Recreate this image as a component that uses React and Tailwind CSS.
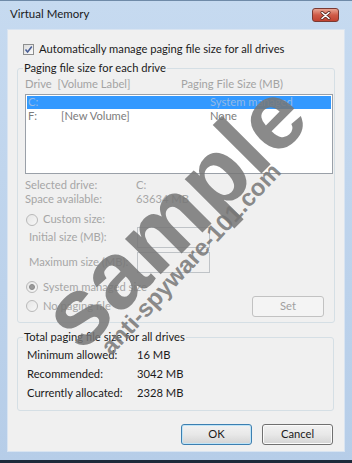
import React from "react";

const FONT = { fontFamily: 'Lato, "Noto Sans", Arial, sans-serif' };

function Radio({ checked }) {
  return (
    <span className="w-[12px] h-[12px] rounded-full border border-[#b9b9b9] bg-gradient-to-br from-[#e6e6e6] to-[#f7f7f7] flex items-center justify-center shrink-0">
      {checked && <span className="w-[6px] h-[6px] rounded-full bg-[#9a9a9a] border border-[#8a8a8a]" />}
    </span>
  );
}

function Button({ children, primary, disabled }) {
  const base = "h-[21px] rounded-[3px] border flex items-center justify-center";
  if (disabled) {
    return <div className={`${base} w-[72px] border-[#c2c2c2] bg-[#f4f4f4] text-[#a0a0a0]`}>{children}</div>;
  }
  return (
    <div
      className={`${base} w-[71px] text-[#1a1a1a] bg-gradient-to-b from-[#f2f2f2] via-[#e8e8e8] to-[#d4d4d4] ${
        primary ? "border-[#3c7fb1] shadow-[inset_0_0_0_1px_#bfe4f7]" : "border-[#707070] shadow-[inset_0_0_0_1px_#fbfbfb]"
      }`}
    >
      {children}
    </div>
  );
}

function TextBox() {
  return <div className="w-[73px] h-[21px] border border-[#bfc3c7] bg-[#f0f0f0]" />;
}

export default function App() {
  return (
    <div className="w-[352px] h-[463px] relative overflow-hidden bg-gradient-to-b from-[#c6daf0] to-[#b6cde8] text-[11.2px]" style={FONT}>
      {/* title bar */}
      <div className="h-[29px] flex items-center justify-between pl-[10px] pr-[13px] border-t border-[#6f8aa8]">
        <span className="text-[11.5px] text-[#1b1b1b] -mt-[2px]">Virtual Memory</span>
        <div className="w-[27px] h-[14px] rounded-[3px] border border-[#7a3a33] bg-gradient-to-b from-[#e8a493] via-[#cf5b48] to-[#c14230] flex items-center justify-center">
          <svg width="11" height="9" viewBox="0 0 11 9">
            <path d="M2 1.5 L9 7.5 M9 1.5 L2 7.5" stroke="#5a2a24" strokeWidth="3" strokeLinecap="round" />
            <path d="M2 1.5 L9 7.5 M9 1.5 L2 7.5" stroke="#ffffff" strokeWidth="1.6" strokeLinecap="round" />
          </svg>
        </div>
      </div>

      {/* client area */}
      <div className="mx-[7px] h-[423px] bg-[#f0f0f0] border border-[#d9e4f1] px-[9px] pt-[11px]">
        <div className="h-[16px] flex items-center ml-[6px] gap-[5px]">
          <span className="w-[11px] h-[11px] border border-[#8e8f8f] bg-gradient-to-br from-[#dcdcdc] to-[#fbfbfb] flex items-center justify-center">
            <svg width="9" height="9" viewBox="0 0 9 9">
              <path d="M1.5 4.5 L3.6 7 L7.8 1.5" fill="none" stroke="#4a5f97" strokeWidth="1.6" />
            </svg>
          </span>
          <span className="text-[#1b1b1b]">Automatically manage paging file size for all drives</span>
        </div>

        {/* group 1 */}
        <fieldset className="mt-[3px] border border-[#d5dfe5] rounded-[3px] pl-[7px] pr-[1px] pb-[5px]">
          <legend className="px-[1px] -ml-[2px] h-[16px] leading-[16px] text-[#1b1b1b]">Paging file size for each drive</legend>
          <div className="h-[16px] flex items-center text-[#a3a3a3]">
            <span className="w-[156px]">Drive&nbsp; [Volume Label]</span>
            <span>Paging File Size (MB)</span>
          </div>
          <div className="mt-[2px] h-[80px] border border-[#9aa0a8] bg-white p-[1px] text-[#7c7c7c]">
            <div className="h-[13px] flex items-center bg-[#3399ff] text-[#93b9e6]">
              <span className="w-[183px] pl-[1px]">C:</span>
              <span>System managed</span>
            </div>
            <div className="h-[15px] flex items-center">
              <span className="w-[34px] pl-[1px]">F:</span>
              <span className="w-[149px]">[New Volume]</span>
              <span>None</span>
            </div>
          </div>

          <div className="mt-[4px] text-[#a6a6a6]">
            <div className="h-[14px] flex items-center">
              <span className="w-[111px]">Selected drive:</span>
              <span>C:</span>
            </div>
            <div className="h-[14px] flex items-center">
              <span className="w-[111px]">Space available:</span>
              <span>63634 MB</span>
            </div>
          </div>

          <div className="mt-[6px] h-[15px] flex items-center gap-[5px] ml-[1px] text-[#a6a6a6]">
            <Radio />
            <span>Custom size:</span>
          </div>
          <div className="flex items-center text-[#a6a6a6]">
            <span className="w-[108px] ml-[4px]">Initial size (MB):</span>
            <TextBox />
          </div>
          <div className="mt-[4px] flex items-center text-[#a6a6a6]">
            <span className="w-[108px] ml-[4px]">Maximum size (MB):</span>
            <TextBox />
          </div>
          <div className="mt-[6px] h-[16px] flex items-center gap-[5px] ml-[1px] text-[#a6a6a6]">
            <Radio checked />
            <span>System managed size</span>
          </div>
          <div className="mt-[1px] flex items-center justify-between text-[#a6a6a6]">
            <div className="flex items-center gap-[5px] ml-[1px]">
              <Radio />
              <span>No paging file</span>
            </div>
            <div className="mr-[9px]">
              <Button disabled>Set</Button>
            </div>
          </div>
        </fieldset>

        {/* group 2 */}
        <fieldset className="mt-[6px] border border-[#d5dfe5] rounded-[3px] pl-[9px] pr-[1px] pt-[1px] pb-[7px] mr-[1px]">
          <legend className="px-[1px] -ml-[4px] h-[16px] leading-[16px] text-[#1b1b1b]">Total paging file size for all drives</legend>
          {[
            ["Minimum allowed:", "16 MB"],
            ["Recommended:", "3042 MB"],
            ["Currently allocated:", "2328 MB"],
          ].map(([k, v]) => (
            <div key={k} className="h-[19px] flex items-center text-[#1b1b1b]">
              <span className="w-[110px]">{k}</span>
              <span>{v}</span>
            </div>
          ))}
        </fieldset>

        <div className="mt-[13px] flex justify-end gap-[10px] mr-[2px]">
          <Button primary>OK</Button>
          <Button>Cancel</Button>
        </div>
      </div>
      <div className="h-[8px]" />
      <div className="h-[3px] bg-[#1d2a3a]" />

      {/* watermark */}
      <div className="absolute left-[174px] top-[215px] -translate-x-1/2 -translate-y-1/2 -rotate-[45deg] text-[95px] font-bold text-[#767676]/85 leading-none whitespace-nowrap pointer-events-none" style={{ fontFamily: '"Liberation Sans", Arial, sans-serif' }}>
        sample
      </div>
      <div className="absolute left-[191px] top-[259px] -translate-x-1/2 -translate-y-1/2 -rotate-[47deg] text-[24px] font-bold text-[#767676]/85 leading-none whitespace-nowrap pointer-events-none" style={{ fontFamily: '"Liberation Sans", Arial, sans-serif' }}>
        anti-spyware-101.com
      </div>
    </div>
  );
}
